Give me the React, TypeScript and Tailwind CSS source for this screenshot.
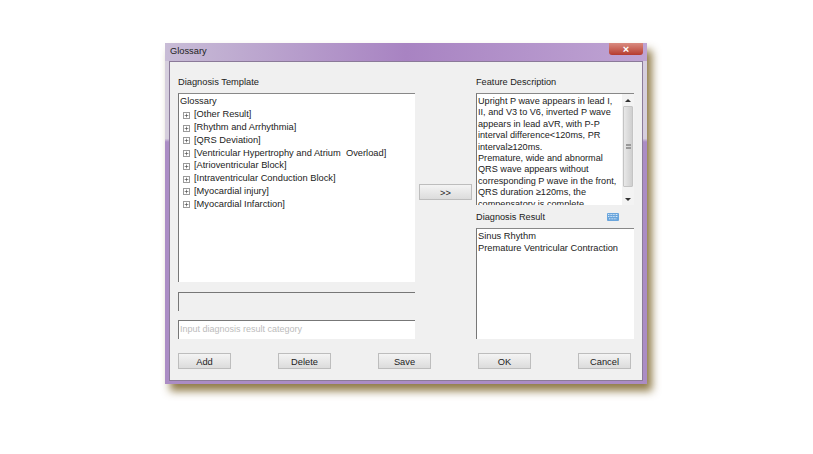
import { Plus } from "lucide-react";

const font = "font-['Liberation_Sans',Arial,sans-serif]";

const items = [
  "[Other Result]",
  "[Rhythm and Arrhythmia]",
  "[QRS Deviation]",
  "[Ventricular Hypertrophy and Atrium\u00a0\u00a0Overload]",
  "[Atrioventricular Block]",
  "[Intraventricular Conduction Block]",
  "[Myocardial injury]",
  "[Myocardial Infarction]",
];

const feature = [
  "Upright P wave appears in lead I,",
  "II, and V3 to V6, inverted P wave",
  "appears in lead aVR, with P-P",
  "interval difference<120ms, PR",
  "interval≥120ms.",
  "Premature, wide and abnormal",
  "QRS wave appears without",
  "corresponding P wave in the front,",
  "QRS duration ≥120ms, the",
  "compensatory is complete",
];

const WinButton = ({ label, className = "" }: { label: string; className?: string }) => (
  <button className={`flex h-[16px] w-[53px] items-center justify-center border border-[#bdbdbd] bg-gradient-to-b from-[#f4f4f4] to-[#dcdcdc] pt-[3px] text-[9.3px] text-[#222] ${className}`}>
    {label}
  </button>
);

const ScrollBar = () => (
  <div className="flex w-[12px] flex-col items-center bg-[#f3f3f3]">
    <div className="mb-[4px] mt-[5px] h-0 w-0 border-x-[3px] border-b-[3px] border-x-transparent border-b-[#333]" />
    <div className="flex h-[81px] w-[10px] items-center justify-center rounded-[1px] border border-[#c4c4c4] bg-gradient-to-r from-[#e8e8e8] to-[#cfcfcf]">
      <div className="h-[5px] w-[5px] border-y-2 border-double border-[#999]" />
    </div>
    <div className="mb-[4px] mt-auto h-0 w-0 border-x-[3px] border-t-[3px] border-x-transparent border-t-[#333]" />
  </div>
);

const KeyboardIcon = () => (
  <svg width="12" height="8" viewBox="0 0 12 8">
    <rect width="12" height="8" rx="1" fill="#6aa5dc" />
    <path d="M1 1.5h10M1 3.5h10M2 5.8h8" stroke="#d5e8f8" strokeWidth="1" strokeDasharray="1 .6" />
  </svg>
);

export default function App() {
  return (
    <div className={`${font} h-[454px] w-[813px] overflow-hidden bg-white pl-[165px] pt-[43px]`}>
      <div className="flex h-[341px] w-[482px] flex-col rounded-t-[3px] bg-gradient-to-b from-[#d6cedd] from-[28%] to-[#ab8cc4] to-[29%] px-[4px] pb-[3px] shadow-[5px_7px_8px_rgba(125,100,40,0.85)]">
        {/* title bar */}
        <div className="-mx-[4px] flex h-[18px] items-start bg-gradient-to-r from-[#c8bcd6] via-[#a883c2] to-[#bfa4d3] pl-[5px] pr-[4px]">
          <span className="pt-[2px] text-[9.3px] text-[#222]">Glossary</span>
          <div className="ml-auto flex h-[12px] w-[34px] items-center justify-center rounded-b-[3px] bg-gradient-to-b from-[#d98a80] to-[#b53a2e] text-[11px] font-bold leading-none text-white">
            ×
          </div>
        </div>

        {/* dialog body */}
        <div className="flex flex-1 flex-col border border-[#8b7a99] bg-[#f0f0f0] px-[8px] pt-[13px]">
          <div className="flex">
            {/* left column */}
            <div className="flex w-[237px] flex-col">
              <div className="h-[18px] text-[9.3px] leading-[14px] text-[#222]">Diagnosis Template</div>
              <div className="h-[189px] border-l border-t border-l-[#777] border-t-[#888] bg-white pl-[1px] pt-[1px] text-[9.3px] text-[#222]">
                <div className="flex h-[14px] items-center">Glossary</div>
                {items.map((item) => (
                  <div key={item} className="flex h-[12.75px] items-center gap-[4px] pl-[3px]">
                    <span className="flex h-[7px] w-[7px] items-center justify-center border border-[#9a9a9a] bg-white">
                      <Plus size={5} strokeWidth={3} className="text-[#444]" />
                    </span>
                    <span className="whitespace-nowrap">{item}</span>
                  </div>
                ))}
              </div>
              <div className="mt-[10px] h-[19px] border-l border-t border-l-[#777] border-t-[#777] bg-[#f0f0f0]" />
              <div className="mt-[9px] flex h-[19px] items-center border-l border-t border-l-[#777] border-t-[#777] bg-white pb-[1px] pl-[1px] text-[9px] text-[#bcbcbc]">
                Input diagnosis result category
              </div>
            </div>

            {/* arrow button */}
            <div className="flex w-[61px] flex-col pl-[4px] pt-[109px]">
              <WinButton label=">>" />
            </div>

            {/* right column */}
            <div className="flex w-[158px] flex-col">
              <div className="h-[18px] text-[9.2px] leading-[14px] text-[#222]">Feature Description</div>
              <div className="flex h-[112px] overflow-hidden border-l border-t border-l-[#777] border-t-[#888] bg-white">
                <div className="flex-1 overflow-hidden pl-[1px] pt-[2px] text-[9.15px] leading-[11.4px] text-[#222]">
                  {feature.map((line) => (
                    <div key={line} className="whitespace-nowrap">{line}</div>
                  ))}
                </div>
                <ScrollBar />
              </div>
              <div className="flex h-[23px] items-center justify-between pr-[15px] text-[9.2px] text-[#222]">
                <span className="pt-[2px]">Diagnosis Result</span>
                <KeyboardIcon />
              </div>
              <div className="h-[111px] border-l border-t border-l-[#777] border-t-[#888] bg-white pl-[1px] pt-[1px] text-[9.3px] leading-[12px] text-[#222]">
                <div>Sinus Rhythm</div>
                <div className="whitespace-nowrap">Premature Ventricular Contraction</div>
              </div>
            </div>
          </div>

          {/* footer buttons */}
          <div className="mt-[14px] flex">
            <WinButton label="Add" />
            <WinButton label="Delete" className="ml-[47px]" />
            <WinButton label="Save" className="ml-[47px]" />
            <WinButton label="OK" className="ml-[47px]" />
            <WinButton label="Cancel" className="ml-[47px]" />
          </div>
        </div>
      </div>
    </div>
  );
}
